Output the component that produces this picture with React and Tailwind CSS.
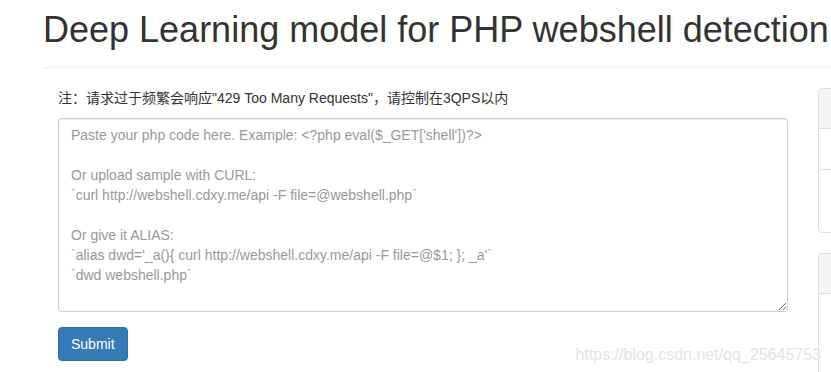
import React from 'react';

const placeholder =
  "Paste your php code here. Example: <?php eval($_GET['shell'])?>\n\n" +
  "Or upload sample with CURL:\n" +
  "`curl http://webshell.cdxy.me/api -F file=@webshell.php`\n\n" +
  "Or give it ALIAS:\n" +
  "`alias dwd='_a(){ curl http://webshell.cdxy.me/api -F file=@$1; }; _a'`\n" +
  "`dwd webshell.php`";

export default function App() {
  return (
    <div className="relative h-[372px] w-[831px] overflow-hidden bg-white pl-[43px] font-['Liberation_Sans','Noto_Sans_CJK_SC',sans-serif] text-[14px] leading-[20px] text-[#333]">
      {/* page header */}
      <h1 className="mt-[10px] whitespace-nowrap text-[36px] leading-[40px] font-normal">
        Deep Learning model for PHP webshell detection
      </h1>
      <div className="mt-[17px] w-[900px] border-t border-[#eee]" />

      <div className="mt-[20px] flex">
        {/* form column */}
        <div className="w-[760px] shrink-0 px-[15px]">
          <p className="mb-[10px]">
            注：请求过于频繁会响应"429 Too Many Requests"，请控制在3QPS以内
          </p>
          <textarea
            className="block h-[194px] w-full rounded-[4px] border border-[#ccc] px-[12px] py-[6px] text-[14px] leading-[20px] text-[#555] shadow-[inset_0_1px_1px_rgba(0,0,0,0.075)] outline-none placeholder:text-[#999]"
            placeholder={placeholder}
          />
          <button
            type="submit"
            className="mt-[15px] rounded-[4px] border border-[#2e6da4] bg-[#337ab7] px-[12px] py-[6px] text-[14px] leading-[20px] text-white"
          >
            Submit
          </button>
        </div>

        {/* side panels */}
        <div className="w-[300px] shrink-0 pl-[15px]">
          <div className="mb-[20px] rounded-[4px] border border-[#ddd]">
            <div className="h-[40px] rounded-t-[4px] border-b border-[#ddd] bg-[#f5f5f5]" />
            <div className="h-[41px] border-b border-[#ddd]" />
            <div className="h-[62px]" />
          </div>
          <div className="h-[200px] rounded-[4px] border border-[#ddd]">
            <div className="h-[40px] rounded-t-[4px] border-b border-[#ddd] bg-[#f5f5f5]" />
          </div>
        </div>
      </div>

      {/* csdn watermark */}
      <div className="absolute right-[10px] top-[345px] text-[16px] leading-[20px] text-[#e3e3e3]">
        https://blog.csdn.net/qq_25645753
      </div>
    </div>
  );
}
